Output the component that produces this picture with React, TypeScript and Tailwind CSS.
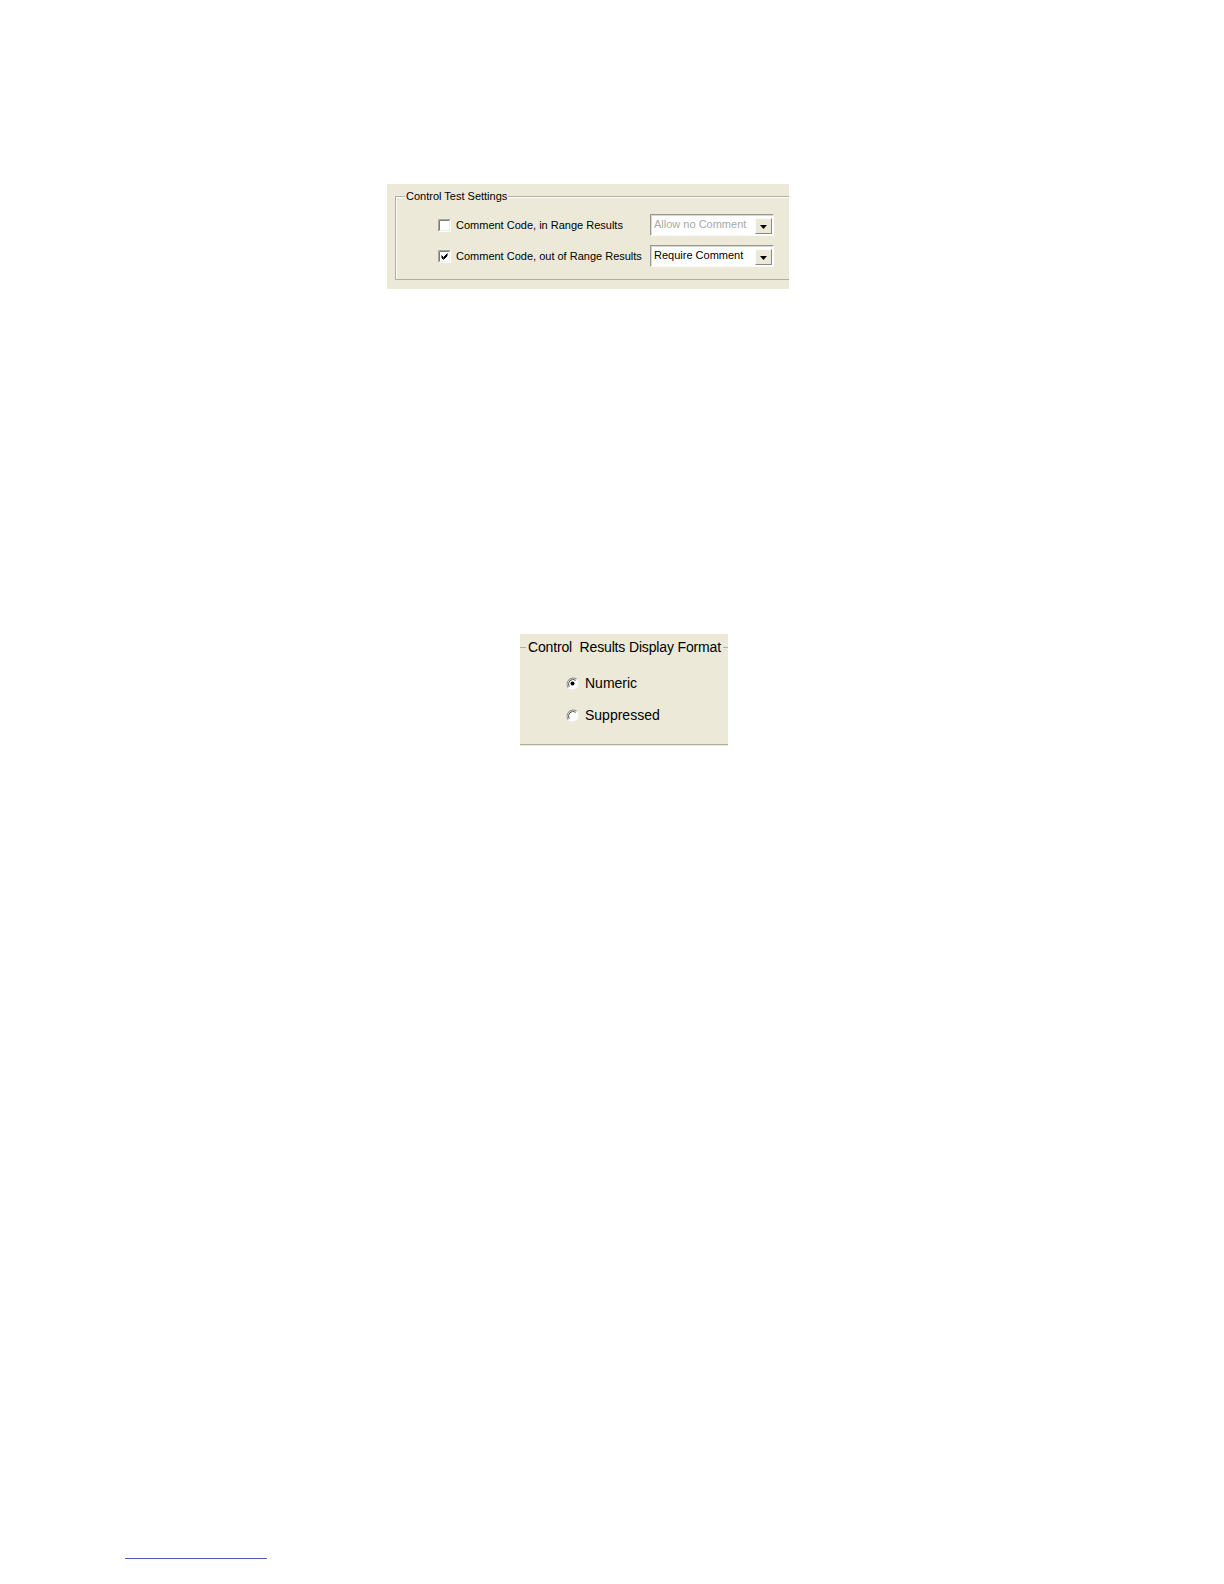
import React from "react";

const font = { fontFamily: '"Liberation Sans", Arial, sans-serif' };

function Check({ checked }: { checked?: boolean }) {
  return (
    <svg width="13" height="13" viewBox="0 0 13 13" className="shrink-0">
      <rect x="0" y="0" width="13" height="13" fill="#ffffff" />
      <path d="M0.5 12.5 V0.5 H12.5" stroke="#a6a6a0" strokeWidth="1" fill="none" />
      <path d="M1.5 11.5 V1.5 H11.5" stroke="#7c7c76" strokeWidth="1" fill="none" />
      <path d="M1.5 12.5 H12.5 V0.5" stroke="#ffffff" strokeWidth="1" fill="none" />
      <path d="M2.5 11.5 H11.5 V2.5" stroke="#ecebe4" strokeWidth="1" fill="none" />
      {checked && (
        <path d="M3.5 5.5 L5.5 7.5 L9.5 3.5 M3.5 6.5 L5.5 8.5 L9.5 4.5 M3.5 7.5 L5.5 9.5 L9.5 5.5" stroke="#000000" strokeWidth="1" fill="none" />
      )}
    </svg>
  );
}

function Radio({ checked }: { checked?: boolean }) {
  return (
    <svg width="13" height="13" viewBox="0 0 13 13" className="shrink-0">
      <circle cx="6.5" cy="6.5" r="6" fill="#ffffff" />
      <path d="M10.7 2.3 A6 6 0 0 0 2.3 10.7" stroke="#8c8c86" strokeWidth="1.2" fill="none" />
      <path d="M9.7 3.3 A4.6 4.6 0 0 0 3.3 9.7" stroke="#505050" strokeWidth="1" fill="none" />
      <path d="M2.3 10.7 A6 6 0 0 0 10.7 2.3" stroke="#fbfbf8" strokeWidth="1.2" fill="none" />
      {checked && <circle cx="6.5" cy="6.5" r="2" fill="#000000" />}
    </svg>
  );
}

function Combo({ text, disabled }: { text: string; disabled?: boolean }) {
  return (
    <div className="w-[124px] h-[22px] bg-white border-t border-l border-t-[#9a9a90] border-l-[#9a9a90] border-b border-r border-b-[#fbfbf8] border-r-[#fbfbf8] flex items-stretch">
      <div className="flex-1 flex border-t border-l border-[#d8d6cc] border-b-0 border-r-0">
        <div
          className={
            "flex-1 pl-[2px] text-[11px] leading-[14px] pt-[1px] " +
            (disabled ? "text-[#a8a8a8]" : "text-black")
          }
          style={font}
        >
          {text}
        </div>
        <div className="w-[17px] mt-[2px] mb-[1px] mr-px bg-[#ece9d8] border-t border-l border-t-[#fbfbf8] border-l-[#fbfbf8] border-b border-r border-b-[#8a8a84] border-r-[#8a8a84] flex items-end justify-center pb-[4px]">
          <svg width="7" height="4" viewBox="0 0 7 4">
            <path d="M0 0 H7 L3.5 4 Z" fill="#000" />
          </svg>
        </div>
      </div>
    </div>
  );
}

export default function App() {
  return (
    <div className="w-[1224px] min-h-[1584px] bg-white flex flex-col" style={font}>
      {/* Panel 1 */}
      <div className="mt-[184px] ml-[387px] w-[402px] h-[105px] bg-[#ece9d8] pt-[12px] pl-[8px]">
        <div className="relative h-[84px] border-t border-l border-b border-[#b0ae9e] shadow-[inset_1px_1px_0_#ffffff]">
          <div className="absolute left-[9px] top-[-8px] bg-[#ece9d8] px-px text-[11px] leading-[14px] text-black">
            Control Test Settings
          </div>
          <div className="flex flex-col gap-[9px] pt-[17px] pl-[42px]">
            <div className="flex items-center">
              <div className="w-[212px] flex items-center gap-[5px]">
                <Check />
                <span className="text-[11px] leading-[14px] text-black">Comment Code, in Range Results</span>
              </div>
              <Combo text="Allow no Comment" disabled />
            </div>
            <div className="flex items-center">
              <div className="w-[212px] flex items-center gap-[5px]">
                <Check checked />
                <span className="text-[11px] leading-[14px] text-black">Comment Code, out of Range Results</span>
              </div>
              <Combo text="Require Comment" />
            </div>
          </div>
        </div>
      </div>

      {/* Panel 2 */}
      <div className="mt-[345px] ml-[520px] w-[208px] h-[112px] bg-[#ece9d8] pt-[13px]">
        <div className="relative h-[98px] border-t border-b border-[#b0ae9e]">
          <div className="absolute left-[6px] top-[-10px] bg-[#ece9d8] px-[2px] text-[14px] leading-[18px] tracking-[-0.15px] text-black whitespace-pre">
            Control  Results Display Format
          </div>
          <div className="flex flex-col gap-[14px] pt-[26px] pl-[46px]">
            <div className="flex items-center gap-[6px] h-[18px]">
              <Radio checked />
              <span className="text-[14px] leading-[18px] text-black">Numeric</span>
            </div>
            <div className="flex items-center gap-[6px] h-[18px]">
              <Radio />
              <span className="text-[14px] leading-[18px] text-black">Suppressed</span>
            </div>
          </div>
        </div>
      </div>

      {/* Footnote rule */}
      <div className="mt-[812px] ml-[125px] w-[142px] h-px bg-[#4a5ab8]" />
    </div>
  );
}
